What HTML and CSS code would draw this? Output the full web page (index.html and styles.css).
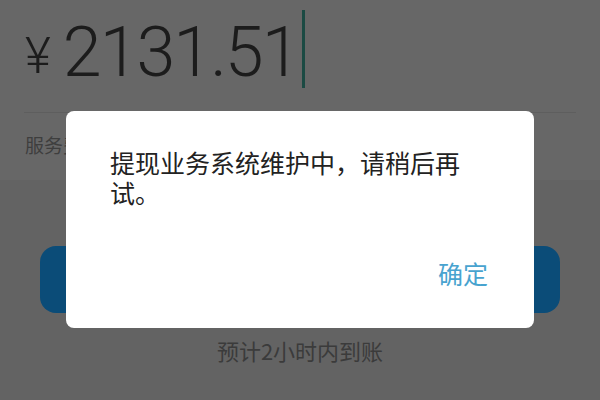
FILE: index.html
```html
<!DOCTYPE html>
<html lang="zh-CN">
<head>
<meta charset="utf-8">
<title>提现</title>
<link rel="stylesheet" href="styles.css">
</head>
<body>
<div class="page">
  <div class="amount-section">
    <div class="amount">
      <span class="yen">¥</span>
      <span class="value">2131.51</span>
      <span class="cursor"></span>
    </div>
    <div class="divider"></div>
  </div>
  <div class="fee-row">
    <span class="fee-label">服务费</span>
  </div>
  <div class="content">
    <div class="submit">提现</div>
    <div class="eta">预计2小时内到账</div>
  </div>

  <div class="dialog">
    <p class="dialog-msg">提现业务系统维护中，请稍后再试。</p>
    <div class="dialog-actions">
      <span class="dialog-btn">确定</span>
    </div>
  </div>
</div>
</body>
</html>
```
FILE: styles.css
```css
* { box-sizing: border-box; }
html, body {
  margin: 0;
  padding: 0;
}
body {
  width: 600px;
  height: 400px;
  overflow: hidden;
  font-family: "Noto Sans CJK SC", "Noto Sans", sans-serif;
  background: #636363;
}
.page {
  position: relative;
  width: 600px;
  height: 400px;
  display: flex;
  flex-direction: column;
}
.amount-section {
  height: 113px;
  background: #676767;
  display: flex;
  flex-direction: column;
}
.amount {
  flex: 1;
  display: flex;
  align-items: center;
  padding-left: 25px;
}
.yen {
  font-family: Roboto, "Noto Sans", sans-serif;
  font-weight: 300;
  font-size: 50px;
  color: #1c1c1c;
  margin-right: 12px;
  line-height: 1;
  margin-top: 0;
}
.value {
  font-family: Roboto, "Noto Sans", sans-serif;
  font-weight: 300;
  font-size: 70px;
  letter-spacing: -2px;
  color: #1c1c1c;
  line-height: 1;
  margin-top: -8px;
}
.cursor {
  width: 3px;
  height: 78px;
  background: #1b4a43;
  margin-left: 3px;
  margin-top: -14px;
}
.divider {
  height: 1px;
  margin: 0 24px 0 24px;
  background: #5e5e5e;
}
.fee-row {
  height: 67px;
  background: #676767;
  display: flex;
  align-items: center;
  padding-left: 25px;
  padding-bottom: 4px;
}
.fee-label {
  font-size: 19px;
  color: #3e3e3e;
}
.content {
  flex: 1;
  background: #636363;
  padding-top: 66px;
  display: flex;
  flex-direction: column;
  align-items: center;
}
.submit {
  width: 520px;
  height: 67px;
  border-radius: 16px;
  background: #0b4c78;
  color: #6b8aa0;
  font-size: 22px;
  display: flex;
  align-items: center;
  justify-content: center;
}
.eta {
  margin-top: 26px;
  font-size: 22px;
  color: #3b3b3b;
  line-height: 1;
}
.dialog {
  position: absolute;
  left: 66px;
  top: 111px;
  width: 468px;
  height: 217px;
  background: #ffffff;
  border-radius: 8px;
  padding: 36px 60px 0 44px;
  display: flex;
  flex-direction: column;
}
.dialog-msg {
  margin: 0;
  font-size: 25px;
  line-height: 30px;
  color: #222222;
}
.dialog-actions {
  display: flex;
  justify-content: flex-end;
  margin-top: 51px;
  margin-right: -14px;
}
.dialog-btn {
  font-size: 25px;
  line-height: 30px;
  color: #48a3cf;
}
```
